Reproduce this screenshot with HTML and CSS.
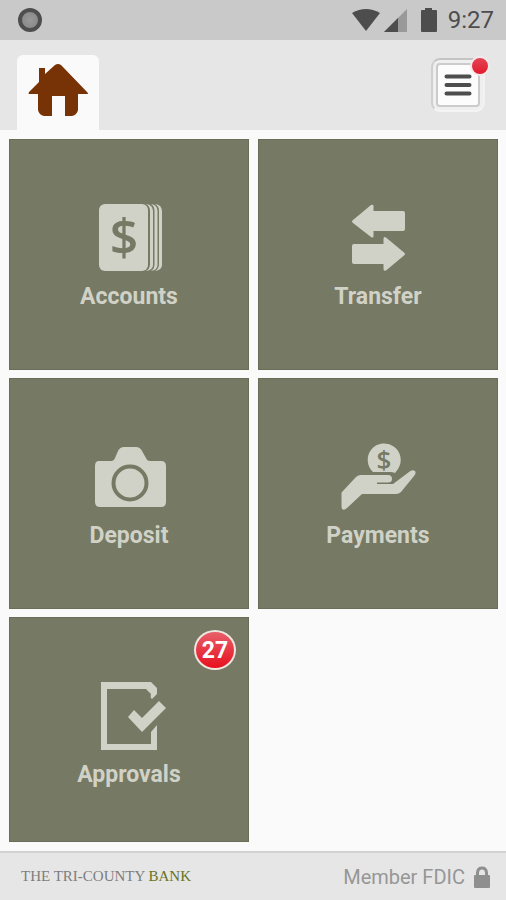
FILE: index.html
```html
<!DOCTYPE html>
<html lang="en">
<head>
<meta charset="utf-8">
<meta name="viewport" content="width=device-width, initial-scale=1">
<title>The Tri-County Bank</title>
<link rel="stylesheet" href="styles.css">
</head>
<body>
<div class="status">
  <span class="record"></span>
  <div class="status-right">
    <svg class="signals" width="88" height="26" viewBox="0 0 88 26" aria-hidden="true">
      <path d="M2 6Q16-2 30 6L16 24Z" fill="#4d4d4d"/>
      <path d="M57 2V25H34Z" fill="#999"/>
      <path d="M48 11V25H34Z" fill="#4d4d4d"/>
      <path d="M75 1h7v2h4q1 0 1 1v20q0 1-1 1H72q-1 0-1-1V4q0-1 1-1h3Z" fill="#4d4d4d"/>
    </svg>
    <span class="time">9:27</span>
  </div>
</div>
<header class="header">
  <a class="home" href="#" aria-label="Home">
    <svg width="62" height="56" viewBox="0 0 62 56" aria-hidden="true">
      <path d="M12 6H18V12L28 3Q31 1 34 3L60 30Q62 32 60 32H51V48Q50 53 45 54H38V34H25V54H17Q12 53 11 48V32H2Q1 32 2 30L12 20Z" fill="#773205"/>
    </svg>
  </a>
  <button class="menu" type="button" aria-label="Menu">
    <span class="menu-face">
      <svg width="28" height="24" viewBox="0 0 28 24" aria-hidden="true">
        <path d="M2.500 3.500H25.500M2.500 12H25.500M2.500 20.500H25.500" stroke="#4d4d4d" stroke-width="4" stroke-linecap="round"/>
      </svg>
    </span>
    <span class="dot"></span>
  </button>
</header>
<main class="tiles">
  <a class="tile" href="#">
    <svg class="icon" viewBox="0 0 80 72" aria-hidden="true">
      <rect x="10" y="2" width="49" height="67" rx="6"/>
      <path d="M57 2Q64 3 64 9V63Q64 68 57 69Q61 67 61 62V9Q61 4 57 2ZM62 2Q68.500 3 68.500 9V63Q68.500 68 62 69Q65.500 67 65.500 62V9Q65.500 4 62 2ZM66 2Q73 3 73 9V63Q73 68 66 69Q70 67 70 62V9Q70 4 66 2Z"/>
      <text class="dollar" x="35" y="53">$</text>
    </svg>
    <span>Accounts</span>
  </a>
  <a class="tile" href="#">
    <svg class="icon" viewBox="0 0 80 72" aria-hidden="true">
      <path d="M15 18L33 3Q35.500 2 35.500 4V9H65Q67 9 67 11V27Q67 29 65 29H35.500V34Q35.500 36.500 33 35L15 21Q13 19.500 15 18Z"/>
      <path d="M66 50.500L48 35.500Q45.500 34 45.500 37V42H16Q14 42 14 44V60Q14 62 16 62H45.500V67Q45.500 69.500 48 68.500L66 53.500Q68 52 66 50.500Z"/>
    </svg>
    <span>Transfer</span>
  </a>
  <a class="tile" href="#">
    <svg class="icon" viewBox="0 0 80 72" aria-hidden="true">
      <path d="M10 20H22Q25 20 26 17L29 10Q31 6 35 6H47Q51 6 53 10L57 17Q58 20 61 20H72Q77 20 77 25V61Q77 66 72 66H11Q6 66 6 61V25Q6 20 10 20Z"/>
      <circle class="hole" cx="41" cy="42" r="16.500"/>
    </svg>
    <span>Deposit</span>
  </a>
  <a class="tile" href="#">
    <svg class="icon" viewBox="0 0 80 72" aria-hidden="true">
      <path d="M35 31A16.500 16.500 0 1 1 60 28L57 32Q55 31 52 31Z"/>
      <text class="dollar coin" x="46" y="28">$</text>
      <path d="M4 51L18 36Q20 34 23 34H50Q54 34 54 38Q54 41.500 50 41.500H39V43H55L71 31Q74 28 77 30Q78.500 32 76 35L63 51Q61 53 58 53H24L9 67Q6 70 4 68Q3.500 67 3.500 65V52Z"/>
    </svg>
    <span>Payments</span>
  </a>
  <a class="tile" href="#">
    <svg class="icon" viewBox="0 0 80 72" aria-hidden="true">
      <path d="M12 2H62L68 8V14L63 19Q61 18 62 14L57 9H18V64H62V52L68 45V70H12Z"/>
      <path d="M39 37L45 30L53 38L70 21L77 28L53 52Z"/>
    </svg>
    <span>Approvals</span>
    <span class="badge">27</span>
  </a>
</main>
<footer class="footer">
  <span class="brand">THE TRI-COUNTY <span class="bank">BANK</span></span>
  <span class="member">Member FDIC
    <svg width="18" height="22" viewBox="0 0 18 22" aria-hidden="true">
      <path d="M4.500 10V6.500Q5 2 9 2T13.500 6.500V10" fill="none" stroke="#8f8f8f" stroke-width="3"/>
      <rect x="1" y="9" width="16" height="13" rx="1" fill="#8f8f8f"/>
    </svg>
  </span>
</footer>
</body>
</html>
```

FILE: styles.css
```css
* {
  box-sizing: border-box;
}

body {
  margin: 0;
  min-height: 100vh;
  display: flex;
  flex-direction: column;
  background: #fafafa;
  font-family: Roboto, "Liberation Sans", sans-serif;
}

.status {
  height: 40px;
  padding: 0 12px 0 18px;
  display: flex;
  align-items: center;
  justify-content: space-between;
  background: #c9c9c9;
}

.record {
  width: 24px;
  height: 24px;
  border: 4px solid #4e4e4e;
  border-radius: 50%;
  background: radial-gradient(#999, #858585);
}

.status-right {
  display: flex;
  align-items: center;
  gap: 10px;
}

.time {
  font-size: 24px;
  line-height: 26px;
  color: #4d4d4d;
}

.header {
  height: 90px;
  padding: 0 21px 0 17px;
  display: flex;
  justify-content: space-between;
  background: #e6e6e6;
}

.home {
  width: 82px;
  margin-top: 15px;
  padding: 7px 10px;
  border-radius: 6px 6px 0 0;
  background: #fafafa;
}

.menu {
  position: relative;
  width: 54px;
  height: 54px;
  margin-top: 18px;
  padding: 0;
  display: flex;
  align-items: center;
  justify-content: center;
  border: 2px solid;
  border-color: #c4c4c4 #f2f2f2 #f4f4f4 #cfcfcf;
  border-radius: 9px;
  background: #efefef;
}

.menu-face {
  width: 44px;
  height: 44px;
  display: flex;
  align-items: center;
  justify-content: center;
  border: 2px solid #cbcbcb;
  border-radius: 4px;
  background: #fcfcfc;
}

.dot {
  position: absolute;
  top: -4px;
  right: -7px;
  width: 20px;
  height: 20px;
  border: 2px solid #f4eaea;
  border-radius: 50%;
  background: linear-gradient(#e34455, #e21c2c);
}

.tiles {
  flex: 1;
  padding: 9px 8px 9px 9px;
  display: grid;
  grid-template-columns: 1fr 1fr;
  grid-template-rows: 231px 231px minmax(225px, 1fr);
  gap: 8px 9px;
}

.tile {
  position: relative;
  padding-top: 62px;
  display: flex;
  flex-direction: column;
  align-items: center;
  gap: 9px;
  border: 1px solid #6a6e58;
  background: #767963;
  color: #d0d2c7;
  font-size: 23px;
  font-weight: 700;
  line-height: 28px;
  text-decoration: none;
}

.icon {
  width: 80px;
  height: 72px;
  overflow: visible;
  fill: #d0d2c7;
}

.hole {
  fill: none;
  stroke: #767963;
  stroke-width: 4;
}

.dollar {
  fill: #767963;
  font: 600 50px "Open Sans", sans-serif;
  text-anchor: middle;
}

.coin {
  font-size: 26px;
}

.badge {
  position: absolute;
  top: 12px;
  right: 12px;
  width: 42px;
  height: 40px;
  border: 2px solid #eee6df;
  border-radius: 50%;
  background: linear-gradient(#e6606a, #e8101f);
  color: #fff;
  line-height: 38px;
  text-align: center;
}

.footer {
  height: 49px;
  padding: 0 15px 0 21px;
  display: flex;
  align-items: center;
  justify-content: space-between;
  border-top: 2px solid #d2d2d2;
  background: #e6e6e6;
}

.brand {
  font-family: "Liberation Serif", serif;
  font-size: 15px;
  color: #7d7d7d;
}

.bank {
  color: #667524;
}

.member {
  display: flex;
  align-items: center;
  gap: 8px;
  font-size: 20px;
  color: #969696;
}
```
